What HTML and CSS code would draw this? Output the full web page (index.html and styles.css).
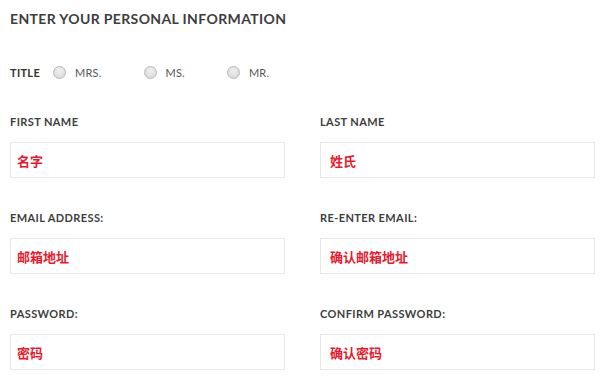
FILE: index.html
```html
<!DOCTYPE html>
<html>
<head>
<meta charset="utf-8">
<link rel="stylesheet" href="styles.css">
</head>
<body>
<div class="form">
  <h2 class="heading">ENTER YOUR PERSONAL INFORMATION</h2>
  <div class="title-row">
    <span class="title-label">TITLE</span>
    <label class="radio"><span class="dot"></span><span class="rtext">MRS.</span></label>
    <label class="radio"><span class="dot"></span><span class="rtext">MS.</span></label>
    <label class="radio"><span class="dot"></span><span class="rtext">MR.</span></label>
  </div>
  <div class="grid">
    <div class="field left">
      <div class="label">FIRST NAME</div>
      <div class="box"><span class="val">名字</span></div>
    </div>
    <div class="field right">
      <div class="label">LAST NAME</div>
      <div class="box"><span class="val">姓氏</span></div>
    </div>
    <div class="field left">
      <div class="label">EMAIL ADDRESS:</div>
      <div class="box"><span class="val">邮箱地址</span></div>
    </div>
    <div class="field right">
      <div class="label">RE-ENTER EMAIL:</div>
      <div class="box"><span class="val">确认邮箱地址</span></div>
    </div>
    <div class="field left">
      <div class="label">PASSWORD:</div>
      <div class="box"><span class="val">密码</span></div>
    </div>
    <div class="field right">
      <div class="label">CONFIRM PASSWORD:</div>
      <div class="box"><span class="val">确认密码</span></div>
    </div>
  </div>
</div>
</body>
</html>
```
FILE: styles.css
```css
html, body {
  margin: 0;
  padding: 0;
  background: #fff;
}
body {
  font-family: Lato, "Noto Sans", sans-serif;
  color: #414141;
}
.form {
  padding: 10px 7px 0 10px;
}
.heading {
  margin: 0;
  font-size: 14px;
  font-weight: 700;
  letter-spacing: 0.37px;
  line-height: 17px;
  height: 17px;
  color: #3e3e3e;
}
.title-row {
  display: flex;
  align-items: center;
  margin-top: 37px;
  height: 16px;
}
.title-label {
  font-size: 11px;
  font-weight: 700;
  letter-spacing: 0.3px;
  margin-right: 13px;
  color: #333;
}
.radio {
  display: flex;
  align-items: center;
  margin-right: 42px;
}
.dot {
  width: 11px;
  height: 11px;
  border-radius: 50%;
  border: 1px solid #b8b8b8;
  background: radial-gradient(circle at 50% 35%, #f0f0f0, #d4d4d4);
  margin-right: 9px;
}
.rtext {
  font-size: 11px;
  color: #555;
  letter-spacing: 0.2px;
}
.grid {
  display: grid;
  grid-template-columns: 275px 275px;
  column-gap: 35px;
  row-gap: 33px;
  margin-top: 35px;
}
.label {
  font-size: 11px;
  font-weight: 700;
  letter-spacing: 0.4px;
  line-height: 14px;
  height: 14px;
  color: #3e3e3e;
}
.box {
  margin-top: 13px;
  height: 34px;
  border: 1px solid #e8e8e8;
  display: flex;
  align-items: center;
}
.left .box { padding-left: 6px; }
.right .box { padding-left: 9px; }
.val {
  font-family: "Noto Sans CJK SC", sans-serif;
  font-weight: 700;
  font-size: 13px;
  color: #e8192c;
}
```
